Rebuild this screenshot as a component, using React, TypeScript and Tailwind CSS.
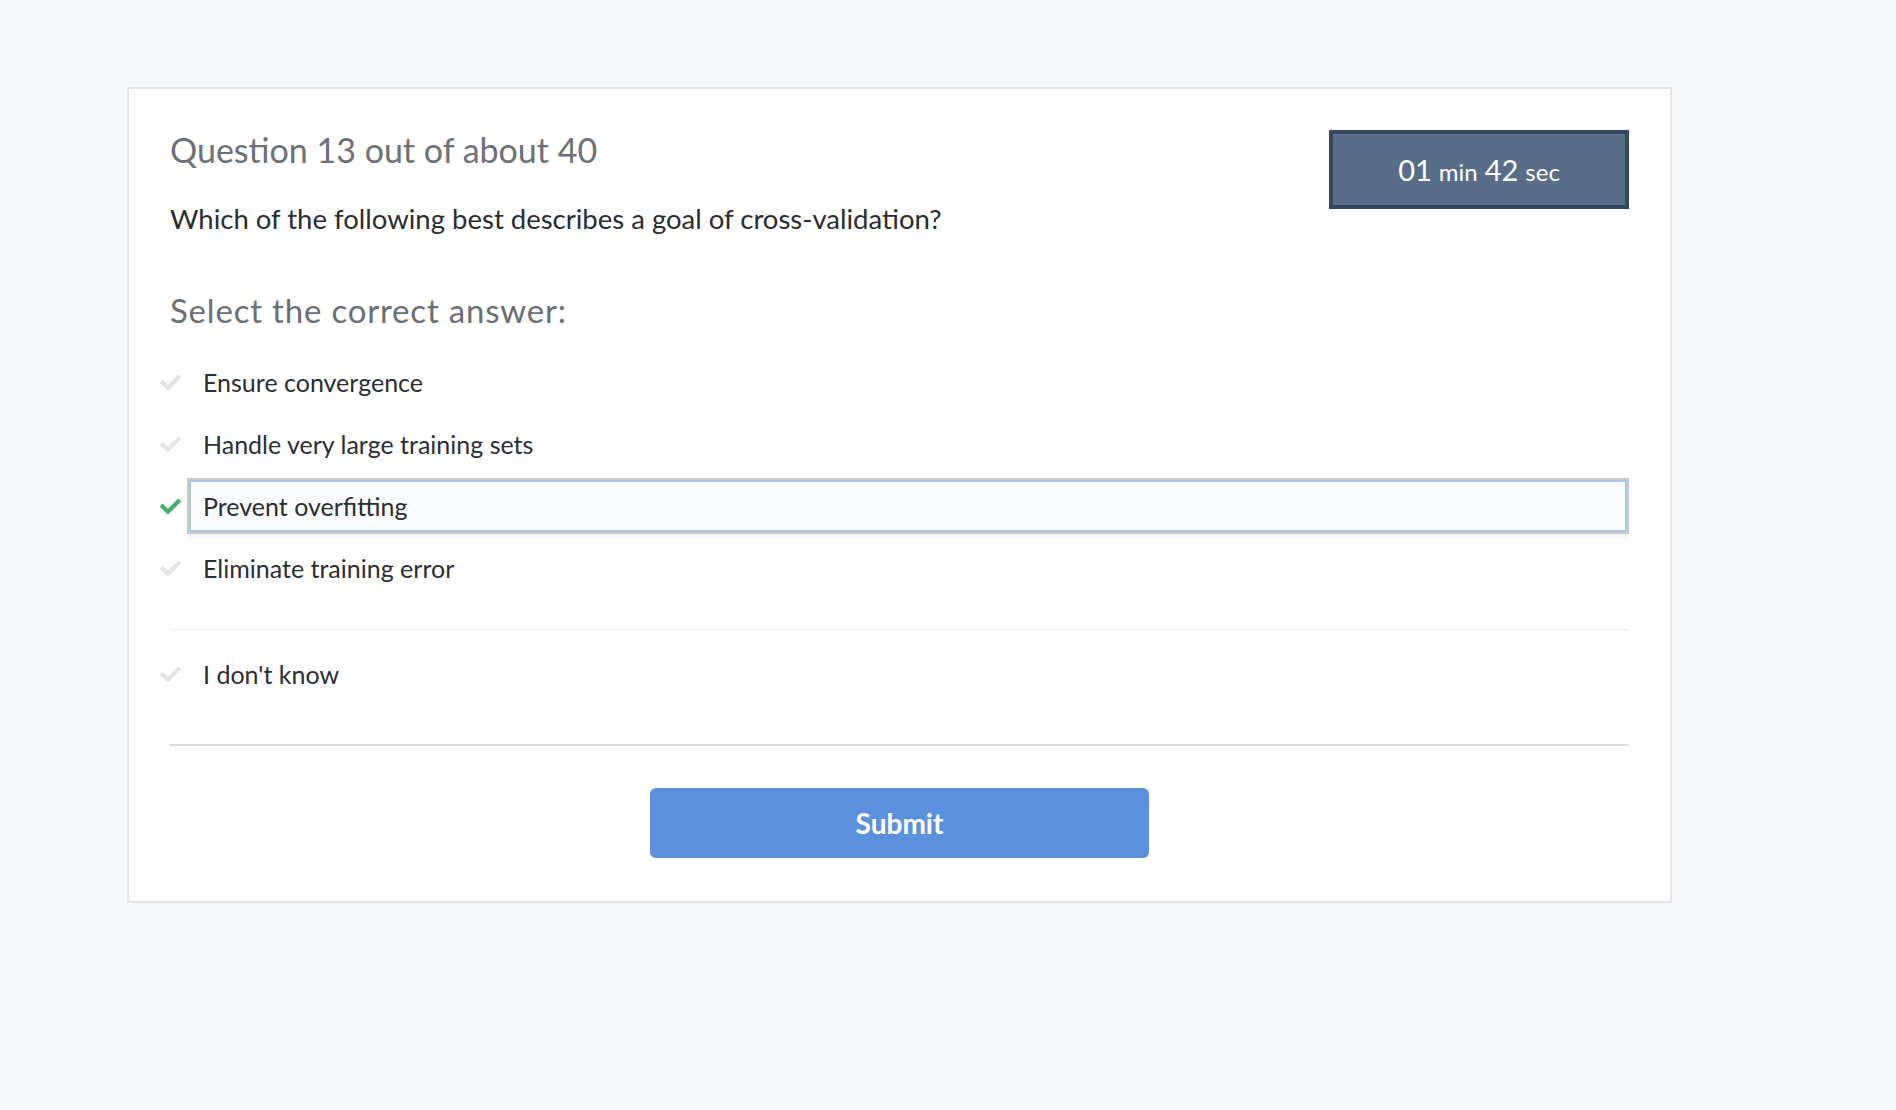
import React, { useState } from "react";
import { FaCheck } from "react-icons/fa";

const answers = [
  "Ensure convergence",
  "Handle very large training sets",
  "Prevent overfitting",
  "Eliminate training error",
];

function AnswerRow({
  label,
  selected,
  onClick,
}: {
  label: string;
  selected: boolean;
  onClick: () => void;
}) {
  return (
    <div className="flex items-center h-[56px] cursor-pointer" onClick={onClick}>
      <div className="w-[27px] -ml-[10px] flex items-center shrink-0">
        <FaCheck
          className={`w-[21px] h-[21px] ${selected ? "text-[#45b26f]" : "text-[#e4e4e4]"}`}
        />
      </div>
      <div
        className={`flex-1 h-full border-2 pl-[14px] pr-[15px] text-[25px] leading-[52px] text-[#2b2e33] ${
          selected
            ? "border-[#cbcbcb] bg-[#f9fbfd] shadow-[inset_0_0_0_2px_#a9c6ee,0_2px_5px_rgba(0,0,0,0.07)]"
            : "border-transparent"
        }`}
      >
        {label}
      </div>
    </div>
  );
}

export default function App() {
  const [selected, setSelected] = useState<number>(2);

  return (
    <div
      className="min-h-screen bg-[#f6f7f9] pt-[87px] pl-[127px]"
      style={{ fontFamily: "Lato, 'Open Sans', sans-serif" }}
    >
      <div className="w-[1545px] bg-white border-2 border-[#e1e3e6] px-[41px] pt-[41px] pb-[43px]">
        <div className="flex justify-between items-start">
          <div>
            <h1 className="text-[34px] leading-[40px] text-[#6c7077]">
              Question 13 out of about 40
            </h1>
            <p className="mt-[33px] text-[27.5px] leading-[32px] text-[#2a2d31]">
              Which of the following best describes a goal of cross-validation?
            </p>
          </div>
          <div className="w-[300px] h-[79px] border-4 border-[#34475c] bg-[#586e88] flex items-center justify-center text-white">
            <span className="flex items-baseline gap-[7px]">
              <span className="text-[29px]">01</span>
              <span className="text-[24px]">min</span>
              <span className="text-[29px]">42</span>
              <span className="text-[24px]">sec</span>
            </span>
          </div>
        </div>

        <h2 className="mt-[56px] text-[33px] tracking-[0.8px] leading-[38px] text-[#6b6e73]">
          Select the correct answer:
        </h2>

        <div className="mt-[25px] flex flex-col gap-[6px]">
          {answers.map((a, i) => (
            <AnswerRow
              key={a}
              label={a}
              selected={selected === i}
              onClick={() => setSelected(i)}
            />
          ))}
        </div>

        <div className="mt-[33px] h-px bg-[#efefef]" />

        <div className="mt-[16px]">
          <AnswerRow
            label="I don't know"
            selected={selected === 4}
            onClick={() => setSelected(4)}
          />
        </div>

        <div className="mt-[42px] h-[2px] bg-[#dddddd]" />

        <div className="mt-[42px] flex justify-center">
          <button className="w-[499px] h-[70px] rounded-[6px] bg-[#5b91dc] text-white text-[28px] font-bold">
            Submit
          </button>
        </div>
      </div>
    </div>
  );
}
